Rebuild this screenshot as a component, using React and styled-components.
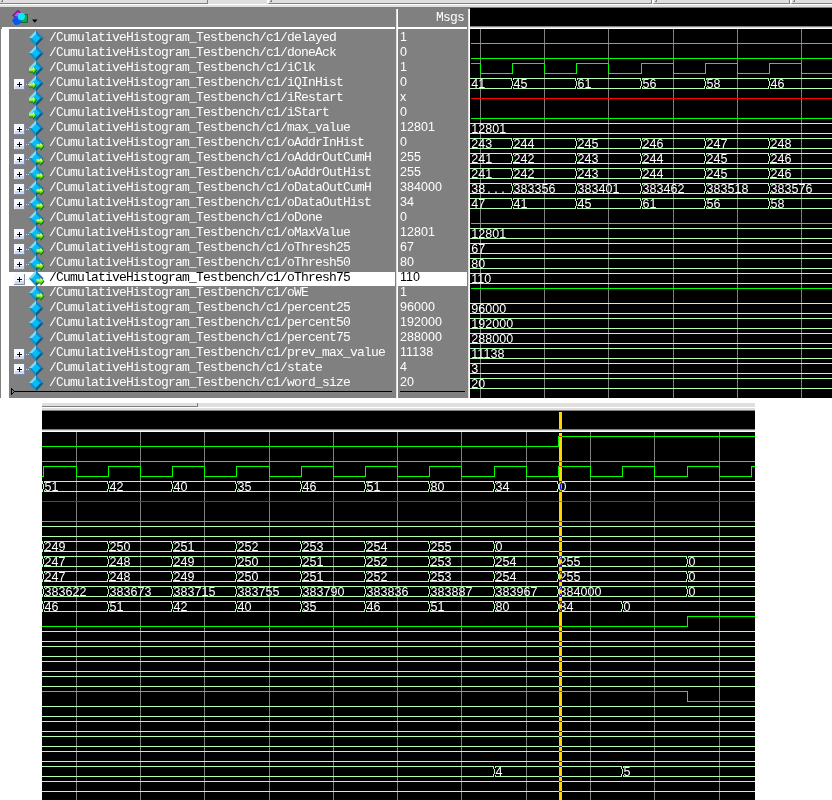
import React from "react";
import styled, { createGlobalStyle, css } from "styled-components";

const GREY = "#808080";
const FACE = "#e0dfde";
const BUS = "#b4ffb4";
const GREEN = "#00ff00";

const GlobalStyle = createGlobalStyle`
  body { margin: 0; background: #fff; }
`;

const mono = css`
  font-family: "Liberation Mono", monospace;
  font-size: 13px;
  letter-spacing: -0.801px;
  line-height: 15px;
  white-space: pre;
`;

const numeric = css`
  font-family: "Liberation Sans", sans-serif;
  font-size: 12.5px;
  letter-spacing: 0.05px;
  white-space: pre;
`;

const Page = styled.div`
  width: 832px;
  height: 800px;
  overflow: hidden;
  background: #fff;
`;

const ToolStrip = styled.div`
  display: flex;
  flex-direction: column;
  height: 8px;
  background: ${FACE};
`;

const Tabs = styled.div`
  display: flex;
  height: 4px;
`;

const Tab = styled.div`
  box-sizing: border-box;
  flex: none;
  width: ${(p) => p.$width}px;
  height: 4px;
  margin-right: ${(p) => p.$gap || 0}px;
  border-bottom: 1px solid ${GREY};
  border-right: ${(p) => (p.$open ? 0 : 1)}px solid ${GREY};
  border-left: ${(p) => (p.$lead ? 2 : 0)}px solid #fff;
`;

const Grip = styled.div`
  box-sizing: border-box;
  width: 2px;
  height: 2px;
  margin-left: 1px;
  border: solid ${GREY};
  border-width: 0 1px 1px 0;
`;

const StripEdge = styled.div`
  box-sizing: border-box;
  height: 4px;
  border-top: 1px solid #fff;
  border-bottom: 1px solid ${GREY};
`;

const MainPanel = styled.section`
  display: flex;
  height: 390px;
  background: ${GREY};
`;

const Column = styled.div`
  box-sizing: border-box;
  display: flex;
  flex-direction: column;
  flex: none;
  width: ${(p) => p.$width}px;
`;

const ColumnHeader = styled.div`
  display: flex;
  align-items: center;
  box-sizing: border-box;
  height: 21px;
  margin-left: ${(p) => p.$inset || 0}px;
  margin-right: 1px;
  padding-left: ${(p) => (p.$inset ? 10 : 0)}px;
  border-bottom: 2px solid #fff;
  color: #fff;
`;

const HeaderLabel = styled.span`
  ${mono}
  margin-left: auto;
  margin-right: 3px;
`;

const ColumnBody = styled.div`
  box-sizing: border-box;
  flex: 1;
  padding-top: 2px;
  border-left: ${(p) => (p.$gutter ? 8 : 0)}px solid #fff;
`;

const OuterEdge = styled.div`
  display: flex;
  flex: 1;
  border-left: 1px solid ${GREY};
`;

const Divider = styled.div`
  box-sizing: border-box;
  flex: none;
  width: 2px;
  margin-top: 1px;
  background: #fff;
  border-left: 1px solid ${FACE};
`;

const NameRow = styled.div`
  display: grid;
  grid-template-columns: 20px 20px 1fr;
  height: 14px;
  margin: 1px 1px 0 0;
  background: ${(p) => (p.$selected ? "#fff" : "transparent")};
  color: ${(p) => (p.$selected ? "#000" : "#fff")};
`;

const NameText = styled.span`
  ${mono}
  margin-top: -2px;
`;

const ValueRow = styled.div`
  ${numeric}
  height: 14px;
  line-height: 11px;
  margin: 1px 1px 0 0;
  padding-left: 2px;
  background: ${(p) => (p.$selected ? "#fff" : "transparent")};
  color: ${(p) => (p.$selected ? "#000" : "#fff")};
`;

const EndMarker = styled.svg`
  display: block;
  overflow: visible;
`;

const ValueEnd = styled.div`
  height: 1px;
  margin: 0 3px 0 2px;
  background: #000;
`;

const Glyph = styled.svg`
  display: block;
  overflow: visible;
`;

const Wave = styled.svg`
  display: block;
  flex: none;
  background: #000;
  text {
    ${numeric}
    fill: #fff;
  }
`;

const Dots = styled.tspan`
  letter-spacing: 3.5px;
`;

const LowerPanel = styled.section`
  width: 713px;
  margin: 5px 0 0 42px;
`;

const CursorBar = styled.path`
  mix-blend-mode: difference;
`;

const SIGNALS = [
  ["delayed", "1", "", false],
  ["doneAck", "0", "", false],
  ["iClk", "1", "in", false],
  ["iQInHist", "0", "in", true],
  ["iRestart", "x", "in", false],
  ["iStart", "0", "in", false],
  ["max_value", "12801", "", true],
  ["oAddrInHist", "0", "out", true],
  ["oAddrOutCumH", "255", "out", true],
  ["oAddrOutHist", "255", "out", true],
  ["oDataOutCumH", "384000", "out", true],
  ["oDataOutHist", "34", "out", true],
  ["oDone", "0", "out", false],
  ["oMaxValue", "12801", "out", true],
  ["oThresh25", "67", "out", true],
  ["oThresh50", "80", "out", true],
  ["oThresh75", "110", "out", true],
  ["oWE", "1", "out", false],
  ["percent25", "96000", "", false],
  ["percent50", "192000", "", false],
  ["percent75", "288000", "", false],
  ["prev_max_value", "11138", "", true],
  ["state", "4", "", true],
  ["word_size", "20", "", false],
];
const SELECTED = 16;

const ExpandBox = () => (
  <Glyph width="20" height="14" viewBox="0 0 20 14" shapeRendering="crispEdges">
    <rect x="5" y="2" width="11" height="11" fill="#7d8aa8" />
    <rect x="5" y="2" width="10" height="10" fill="#f6f8ff" />
    <rect x="6" y="9" width="9" height="3" fill="#d2d8ea" />
    <path d="M8 7h5v1h-5zM10 5h1v5h-1z" fill="#000" />
    <path d="M17 7h1v1h-1zM19 7h1v1h-1z" fill="#d8d8d8" />
  </Glyph>
);

const SignalIcon = ({ direction }) => (
  <Glyph width="20" height="14" viewBox="0 0 20 14">
    <path d="M7 -1.5L14.6 6.3H7z" fill="#0c86cc" />
    <path d="M7 -1.5L-.3 6.3H7z" fill="#7edcfa" />
    <path d="M-.3 6.3L7 14.3V6.3z" fill="#168fc9" />
    <path d="M14.6 6.3L7 14.3V6.3z" fill="#075c87" />
    <path d="M7 2L11.3 6.3L7 10.8L2.8 6.3z" fill="#06bdf5" />
    {direction && (
      <g transform={direction === "in" ? "translate(0 0)" : "translate(7.5 1)"}>
        <path d="M0 7H4V4.5L8 8.5L4 13V10.5H0z" fill="#08720d" />
        <path d="M0 6.5H4V4.5L7 8L4 11V9.5H0z" fill="#7cf018" />
        <path d="M0 6.5H4V4.8L5.4 6.4V7.6H0z" fill="#f2ffb0" />
      </g>
    )}
  </Glyph>
);

const ObjectsIcon = () => (
  <Glyph width="26" height="16" viewBox="0 0 26 16">
    <path d="M0.5 5.5L6 .2L10 4L4 8z" fill="#a010b8" stroke="#58106a" strokeWidth=".7" />
    <path d="M2.3 5.2L6 2L8.3 4L4 6.7z" fill="#e045f0" />
    <rect x="8" y="4.5" width="7.5" height="8" fill="#10a848" stroke="#08602c" strokeWidth=".8" />
    <path d="M0 10.5L3 6.5H8L10.5 9.5L8 13.8L5 15H3z" fill="#0757e8" />
    <circle cx="9.3" cy="6.5" r="3.7" fill="#10e4ff" />
    <path d="M20 9.5H25.5L22.75 12.7z" fill="#000" />
  </Glyph>
);

const repeatBus = (value) => ({ kind: "bus", first: value, changes: [] });
const line = (level, changes = []) => ({ kind: "line", level, changes });
const unknown = { kind: "unknown" };
const zip = (xs, values) => values.map((v, i) => [xs[i], v]);

const upperX = [512, 576, 641, 705, 769];
const upperTraces = [
  line(0),
  line(0),
  line(1, [480, 512, 544, 576, 608, 641, 673, 705, 737, 769, 801]),
  { kind: "bus", first: "41", changes: zip(upperX, ["45", "61", "56", "58", "46"]) },
  unknown,
  line(0),
  repeatBus("12801"),
  { kind: "bus", first: "243", changes: zip(upperX, ["244", "245", "246", "247", "248"]) },
  { kind: "bus", first: "241", changes: zip(upperX, ["242", "243", "244", "245", "246"]) },
  { kind: "bus", first: "241", changes: zip(upperX, ["242", "243", "244", "245", "246"]) },
  { kind: "bus", first: "38", truncated: true, changes: zip(upperX, ["383356", "383401", "383462", "383518", "383576"]) },
  { kind: "bus", first: "47", changes: zip(upperX, ["41", "45", "61", "56", "58"]) },
  line(0),
  repeatBus("12801"),
  repeatBus("67"),
  repeatBus("80"),
  repeatBus("110"),
  line(1),
  repeatBus("96000"),
  repeatBus("192000"),
  repeatBus("288000"),
  repeatBus("11138"),
  repeatBus("3"),
  repeatBus("20"),
];

const lowerX = [43, 108, 172, 236, 301, 365, 429, 494, 558];
const bus = (values, extra = []) => ({ kind: "bus", changes: [...zip(lowerX, values.split(" ")), ...extra] });
const lowerTraces = [
  line(0, [558]),
  line(0),
  line(0, [43, 76, 108, 140, 172, 204, 236, 269, 301, 333, 365, 397, 429, 461, 494, 526, 558, 590, 622, 654, 687, 719, 751]),
  bus("51 42 40 35 46 51 80 34 0"),
  unknown,
  line(0),
  repeatBus(""),
  bus("249 250 251 252 253 254 255 0"),
  bus("247 248 249 250 251 252 253 254 255", [[687, "0"]]),
  bus("247 248 249 250 251 252 253 254 255", [[687, "0"]]),
  bus("383622 383673 383715 383755 383790 383836 383887 383967 384000", [[687, "0"]]),
  bus("46 51 42 40 35 46 51 80 34", [[622, "0"]]),
  line(0, [687]),
  repeatBus(""),
  repeatBus(""),
  repeatBus(""),
  repeatBus(""),
  line(1, [687]),
  repeatBus(""),
  repeatBus(""),
  repeatBus(""),
  repeatBus(""),
  { kind: "bus", changes: [[494, "4"], [622, "5"]] },
  repeatBus(""),
];

const linePath = (trace, start, end, top) => {
  let level = trace.level;
  const y = () => top + (level ? 0.5 : 10.5);
  let d = `M${start} ${y()}`;
  trace.changes.forEach((x) => {
    d += `H${x + 0.5}`;
    level = 1 - level;
    d += `V${y()}`;
  });
  return `${d}H${end}`;
};

const busPath = (trace, start, end, top) => {
  const bottom = top + 10;
  let d = "";
  let from = start;
  trace.changes.forEach(([x]) => {
    d += `M${from} ${top}H${x}V${top + 1}H${from}z M${from} ${bottom}H${x}V${bottom + 1}H${from}z`;
    d += `M${x - 1} ${top}h1v3h-1z M${x - 1} ${top + 8}h1v3h-1z M${x} ${top + 3}h1v5h-1z`;
    d += `M${x + 1} ${top}h1v2h-1z M${x + 1} ${top + 9}h1v2h-1z`;
    from = x + 1;
  });
  return `${d}M${from} ${top}H${end}v1H${from}z M${from} ${bottom}H${end}v1H${from}z`;
};

function WaveView({ x, width, height, lead, grid, traces, cursor }) {
  const end = x + width;
  const start = x + lead;
  return (
    <Wave width={width} height={height} viewBox={`${x} 8 ${width} ${height}`}>
      <g shapeRendering="crispEdges">
        <rect x={x} y="26" width={width} height="1" fill={GREY} />
        <rect x={x} y="27" width={width} height="1" fill="#d8d8d8" />
        <rect x={x} y="28" width={width} height="1" fill="#fff" />
        {grid.map((g) => (
          <rect key={g} x={g} y="29" width="1" height={height} fill={GREY} />
        ))}
        {traces.map((t, i) => {
          const top = 33 + 15 * i;
          if (t.kind === "unknown") return <rect key={i} x={start} y={top + 5} width={end - start} height="1" fill="#f00" />;
          if (t.kind === "line") return <path key={i} d={linePath(t, start, end, top)} fill="none" stroke={GREEN} strokeWidth="1" />;
          return <path key={i} d={busPath(t, x, end, top)} fill={BUS} />;
        })}
      </g>
      {traces.map((t, i) => {
        if (t.kind !== "bus") return null;
        const y = 33 + 15 * i + 10;
        return (
          <g key={i}>
            {t.first && (
              <text x={x + 1.3} y={y}>
                {t.first}
                {t.truncated && <Dots dx="2">...</Dots>}
              </text>
            )}
            {t.changes.map(([cx, v]) => (
              <text key={cx} x={cx + 1.4} y={y}>{v}</text>
            ))}
          </g>
        );
      })}
      {cursor && <CursorBar d={`M${cursor} 9h3v17h-3z M${cursor} 30h3v${height}h-3z`} fill="#ffd700" />}
    </Wave>
  );
}

export default function App() {
  return (
    <Page>
      <GlobalStyle />
      <ToolStrip>
        <Tabs>
          <Tab $width={208} $gap={59}><Grip /></Tab>
          <Tab $width={385} $lead><Grip /></Tab>
          <Tab $width={138} $lead><Grip /></Tab>
          <Tab $width={42} $lead $open><Grip /></Tab>
        </Tabs>
        <StripEdge />
      </ToolStrip>
      <MainPanel>
        <Column $width={396}>
          <ColumnHeader $inset={2}><ObjectsIcon /></ColumnHeader>
          <OuterEdge>
            <ColumnBody $gutter>
              {SIGNALS.map(([name, , direction, expandable], i) => (
                <NameRow key={name} $selected={i === SELECTED}>
                  {expandable ? <ExpandBox /> : <span />}
                  <SignalIcon direction={direction} />
                  <NameText>{`/CumulativeHistogram_Testbench/c1/${name}`}</NameText>
                </NameRow>
              ))}
              <EndMarker width="386" height="7" viewBox="0 0 386 7" shapeRendering="crispEdges">
                <path d="M2.5 -3V4M5 0.5H383" stroke="#000" fill="none" />
                <path d="M2.5 -2.5L5.5 .5L2.5 3.5" stroke="#000" fill="none" />
              </EndMarker>
            </ColumnBody>
          </OuterEdge>
        </Column>
        <Divider />
        <Column $width={70}>
          <ColumnHeader><HeaderLabel>Msgs</HeaderLabel></ColumnHeader>
          <ColumnBody>
            {SIGNALS.map(([name, value], i) => (
              <ValueRow key={name} $selected={i === SELECTED}>{value}</ValueRow>
            ))}
            <ValueEnd />
          </ColumnBody>
        </Column>
        <Divider />
        <WaveView x={470} width={362} height={390} lead={1} grid={[480, 544, 608, 673, 737, 801]} traces={upperTraces} />
      </MainPanel>
      <LowerPanel>
        <ToolStrip>
          <Tabs>
            <Tab $width={156} />
          </Tabs>
          <StripEdge />
        </ToolStrip>
        <WaveView
          x={42}
          width={713}
          height={389}
          lead={0}
          grid={[76, 140, 204, 269, 333, 397, 461, 526, 590, 654, 719]}
          traces={lowerTraces}
          cursor={559}
        />
      </LowerPanel>
    </Page>
  );
}
